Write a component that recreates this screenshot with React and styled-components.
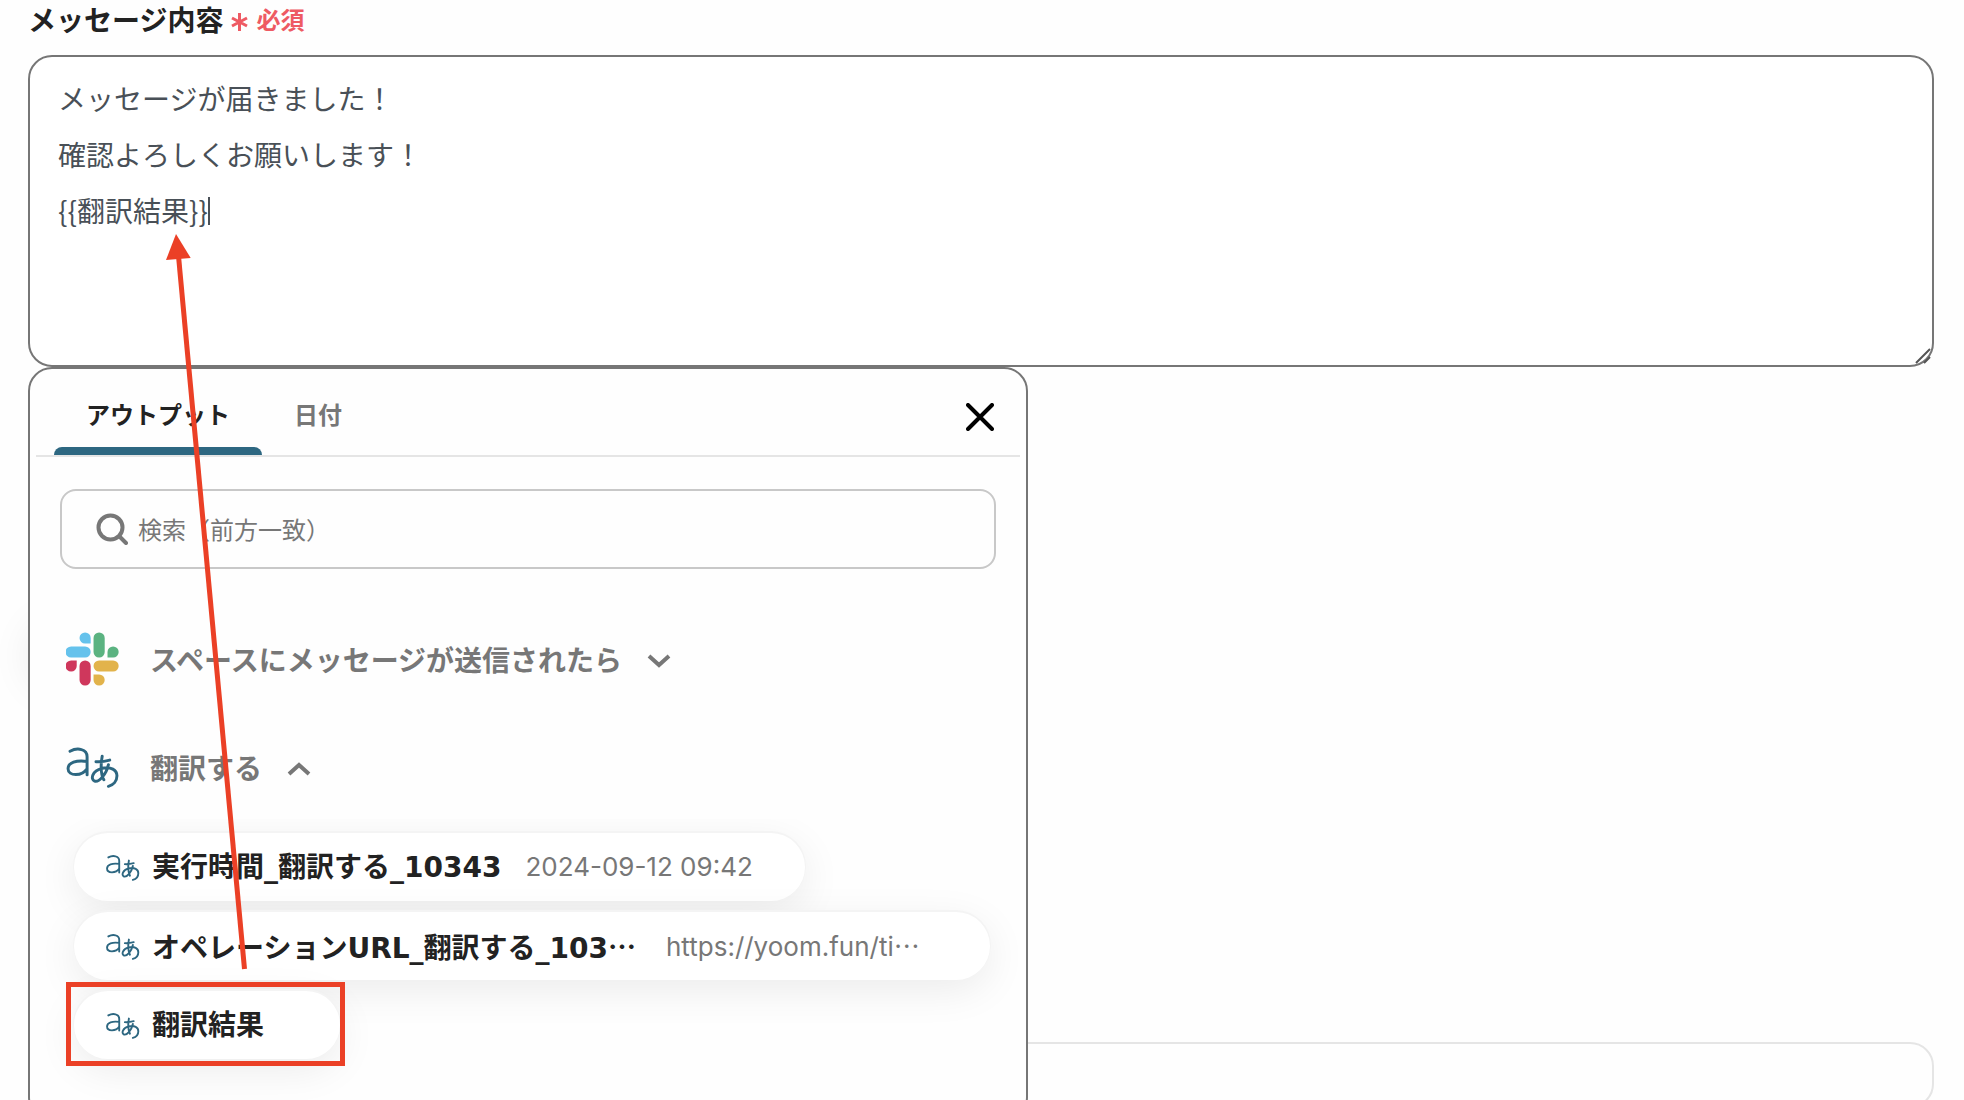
import React from "react";
import styled, { createGlobalStyle } from "styled-components";

const JP = '"Noto Sans CJK JP", "Noto Sans", sans-serif';
const NAME = '"DejaVu Sans", "Noto Sans CJK JP", sans-serif';
const VALUE = 'Inter, "Noto Sans CJK JP", sans-serif';

const GlobalStyle = createGlobalStyle`
  *, *::before, *::after { box-sizing: border-box; }
  body { margin: 0; background: #fefefe; font-family: ${JP}; color: #222; }
  button, input, textarea { font: inherit; color: inherit; margin: 0; }
  button { padding: 0; border: 0; background: none; cursor: pointer; }
`;

const Page = styled.main`
  position: relative;
  height: 100vh;
  overflow: hidden;
  padding: 0 30px 0 28px;
`;

const LabelRow = styled.div`
  display: flex;
  align-items: center;
  gap: 8px;
  height: 38px;
  margin-bottom: 17px;
  line-height: 38px;
`;

const FieldLabel = styled.label`
  font-size: 28px;
  font-weight: 700;
`;

const Required = styled.span`
  display: flex;
  align-items: center;
  gap: 8px;
  color: #ee5a63;
  font-size: 24px;
  font-weight: 700;

  svg { margin-top: 6px; }
`;

const Field = styled.div`
  position: relative;
`;

const MessageBox = styled.textarea`
  display: block;
  width: 100%;
  height: 312px;
  padding: 13px 28px;
  border: 2px solid #767676;
  border-radius: 24px;
  outline: 0;
  background: #fff;
  color: #495057;
  font-family: ${JP};
  font-size: 28px;
  line-height: 56px;
  resize: vertical;

  &::-webkit-resizer { background: transparent; }
`;

const Grip = styled.svg`
  position: absolute;
  right: 3px;
  bottom: 3px;
  pointer-events: none;
`;

const Caret = styled.span`
  position: absolute;
  top: 142px;
  left: 180px;
  width: 2px;
  height: 28px;
  background: #495057;
`;

const Panel = styled.section`
  position: absolute;
  z-index: 1;
  top: 100%;
  left: 0;
  width: 1000px;
  padding: 0 6px;
  border: 2px solid #767676;
  border-radius: 24px;
  background: #fefefe;
`;

const PanelHeader = styled.header`
  display: flex;
  align-items: stretch;
  justify-content: space-between;
  height: 88px;
  padding: 0 20px 0 18px;
  border-bottom: 2px solid #e5e5e5;
`;

const Tabs = styled.div`
  display: flex;
`;

const Tab = styled.button`
  display: flex;
  flex-direction: column;
  justify-content: space-between;
  padding-top: 25px;
  color: ${(p) => (p.$active ? "#222" : "#777")};
  font-size: 24px;
  font-weight: 700;
  line-height: 40px;

  span { padding: 0 32px; }

  &::after {
    content: "";
    width: 100%;
    height: 8px;
    border-radius: 8px 8px 0 0;
    background: ${(p) => (p.$active ? "#2d6781" : "transparent")};
  }
`;

const CloseButton = styled.button`
  display: flex;
  align-items: center;
  justify-content: center;
  width: 40px;
  padding-top: 10px;
  color: #000;
`;

const SearchBox = styled.label`
  display: flex;
  align-items: center;
  gap: 10px;
  height: 80px;
  margin: 32px 24px 38px;
  padding: 0 32px 0 34px;
  border: 2px solid #c8c8c8;
  border-radius: 16px;
  color: #777;
`;

const SearchInput = styled.input`
  flex: 1;
  min-width: 0;
  padding: 0;
  border: 0;
  outline: 0;
  background: none;
  font-size: 24px;
  line-height: 40px;

  &::placeholder { color: #777; opacity: 1; }
`;

const Groups = styled.div`
  display: flex;
  flex-direction: column;
  gap: 4px;
`;

const GroupButton = styled.button`
  display: flex;
  align-items: center;
  height: 104px;
  padding-left: 30px;
  color: #777;
  font-size: 28px;
  font-weight: 700;
  line-height: 40px;

  span { margin: 0 24px 0 30px; }
`;

const OutputList = styled.ul`
  display: flex;
  flex-direction: column;
  align-items: flex-start;
  gap: 11px;
  margin: 0;
  padding: 14px 28px 60px 38px;
  overflow: hidden;
  list-style: none;
`;

const OutputItem = styled.button`
  display: flex;
  align-items: center;
  height: 68px;
  padding: 0 52px 0 32px;
  border-radius: 34px;
  background: #fff;
  box-shadow: 0 -1px 0 1px #f4f4f4, 0 10px 40px rgba(0, 0, 0, 0.08);
  line-height: 40px;
  white-space: nowrap;
`;

const OutputName = styled.span`
  width: ${(p) => (p.$clipped ? "490px" : "auto")};
  margin: 0 24px 0 12px;
  padding-top: 2px;
  text-align: left;
  font-family: ${NAME};
  font-size: 28px;
  font-weight: 700;
`;

const OutputValue = styled.span`
  width: ${(p) => (p.$clipped ? "272px" : "auto")};
  text-align: left;
  color: #777;
  font-family: ${VALUE};
  font-size: 26px;
`;

const Ellipsis = styled.span`
  font-family: ${JP};
`;

const AddButtonShade = styled.div`
  width: 320px;
  height: 72px;
  margin: 243px 0 360px;
  border-radius: 36px;
  background: #fff;
  box-shadow: 0 10px 40px rgba(0, 0, 0, 0.08);
`;

const NextField = styled.div`
  height: 66px;
  border: 2px solid #e5e5e5;
  border-radius: 24px;
`;

const Annotation = styled.svg`
  position: absolute;
  z-index: 2;
  top: 0;
  left: 0;
  pointer-events: none;
`;

const AsteriskIcon = () => (
  <svg width="17" height="18" viewBox="0 0 17 18" fill="none" stroke="currentColor" strokeWidth="3" aria-hidden="true">
    <path d="M8.500 0V18M1 5L16 13M16 5L1 13" />
  </svg>
);

const CloseIcon = () => (
  <svg width="28" height="28" viewBox="0 0 28 28" fill="none" stroke="currentColor" strokeWidth="4" strokeLinecap="round" aria-hidden="true">
    <path d="M2 2L26 26M26 2L2 26" />
  </svg>
);

const SearchIcon = () => (
  <svg width="32" height="32" viewBox="0 0 32 32" fill="none" stroke="currentColor" strokeWidth="4" strokeLinecap="round" aria-hidden="true">
    <circle cx="14.500" cy="14.500" r="12" />
    <path d="M23.500 23.500L30 30" />
  </svg>
);

const Chevron = ({ up }) => (
  <svg width="26" height="20" viewBox="0 0 26 20" fill="none" stroke="currentColor" strokeWidth="4" aria-hidden="true">
    <path d={up ? "M3 17L13 8L23 17" : "M3 7L13 16L23 7"} />
  </svg>
);

const SlackIcon = () => (
  <svg width="54" height="54" viewBox="0.2 -0.2 24.4 24.4" aria-hidden="true">
    <path fill="#cf375c" d="M5.042 15.165a2.528 2.528 0 0 1-2.520 2.523A2.528 2.528 0 0 1 0 15.165a2.527 2.527 0 0 1 2.522-2.520h2.520v2.520zM6.313 15.165a2.527 2.527 0 0 1 2.521-2.520 2.527 2.527 0 0 1 2.521 2.520v6.313A2.528 2.528 0 0 1 8.834 24a2.528 2.528 0 0 1-2.521-2.522v-6.313z" />
    <path fill="#65c2ec" d="M8.834 5.042a2.528 2.528 0 0 1-2.521-2.520A2.528 2.528 0 0 1 8.834 0a2.528 2.528 0 0 1 2.521 2.522v2.520H8.834zM8.834 6.313a2.528 2.528 0 0 1 2.521 2.521 2.528 2.528 0 0 1-2.521 2.521H2.522A2.528 2.528 0 0 1 0 8.834a2.528 2.528 0 0 1 2.522-2.521h6.312z" />
    <path fill="#5bb381" d="M18.956 8.834a2.528 2.528 0 0 1 2.522-2.521A2.528 2.528 0 0 1 24 8.834a2.528 2.528 0 0 1-2.522 2.521h-2.522V8.834zM17.688 8.834a2.528 2.528 0 0 1-2.523 2.521 2.527 2.527 0 0 1-2.520-2.521V2.522A2.527 2.527 0 0 1 15.165 0a2.528 2.528 0 0 1 2.523 2.522v6.312z" />
    <path fill="#e2b34b" d="M15.165 18.956a2.528 2.528 0 0 1 2.523 2.522A2.528 2.528 0 0 1 15.165 24a2.527 2.527 0 0 1-2.520-2.522v-2.522h2.520zM15.165 17.688a2.527 2.527 0 0 1-2.520-2.523 2.526 2.526 0 0 1 2.520-2.520h6.313A2.527 2.527 0 0 1 24 15.165a2.528 2.528 0 0 1-2.522 2.523h-6.313z" />
  </svg>
);

const TranslateIcon = ({ width, height }) => (
  <svg width={width} height={height} viewBox="20 19 162 128" fill="none" stroke="#2d6781" strokeWidth="9" strokeLinecap="round" aria-hidden="true">
    <path d="M31 35C44 28 56 27 66 30C78 33 83 40 83 52V107M83 66C50 61 25 70 25 88C25 112 68 112 83 88" />
    <path d="M110 67C124 68 138 66 152 62M129 50C124 80 124 104 134 122M148 76C142 104 120 130 106 126C92 120 99 94 128 87C156 81 174 92 174 110C174 126 163 138 148 142" />
  </svg>
);

const outputs = [
  { name: "実行時間_翻訳する_10343", value: "2024-09-12 09:42" },
  { name: "オペレーションURL_翻訳する_103", value: "https://yoom.fun/ti", clipped: true },
  { name: "翻訳結果" },
];

export default function App() {
  return (
    <Page lang="ja">
      <GlobalStyle />
      <LabelRow>
        <FieldLabel htmlFor="message">メッセージ内容</FieldLabel>
        <Required>
          <AsteriskIcon />
          必須
        </Required>
      </LabelRow>
      <Field>
        <MessageBox
          id="message"
          spellCheck={false}
          defaultValue={"メッセージが届きました！\n確認よろしくお願いします！\n{{翻訳結果}}"}
        />
        <Caret />
        <Grip width="16" height="16" viewBox="0 0 16 16" fill="none" stroke="#555" strokeWidth="2" aria-hidden="true">
          <path d="M1 15L15 1M9 15L15 9" />
        </Grip>
        <Panel>
          <PanelHeader>
            <Tabs role="tablist">
              <Tab type="button" role="tab" aria-selected="true" $active>
                <span>アウトプット</span>
              </Tab>
              <Tab type="button" role="tab" aria-selected="false">
                <span>日付</span>
              </Tab>
            </Tabs>
            <CloseButton type="button" aria-label="閉じる">
              <CloseIcon />
            </CloseButton>
          </PanelHeader>
          <SearchBox>
            <SearchIcon />
            <SearchInput type="text" placeholder="検索（前方一致）" aria-label="検索" />
          </SearchBox>
          <Groups>
            <GroupButton type="button" aria-expanded="false">
              <SlackIcon />
              <span>スペースにメッセージが送信されたら</span>
              <Chevron />
            </GroupButton>
            <GroupButton type="button" aria-expanded="true">
              <TranslateIcon width={54} height={42} />
              <span>翻訳する</span>
              <Chevron up />
            </GroupButton>
          </Groups>
          <OutputList>
            {outputs.map(({ name, value, clipped }) => (
              <li key={name}>
                <OutputItem type="button">
                  <TranslateIcon width={34} height={27} />
                  <OutputName $clipped={clipped}>
                    {name}
                    {clipped && <Ellipsis>…</Ellipsis>}
                  </OutputName>
                  {value && (
                    <OutputValue $clipped={clipped}>
                      {value}
                      {clipped && <Ellipsis>…</Ellipsis>}
                    </OutputValue>
                  )}
                </OutputItem>
              </li>
            ))}
          </OutputList>
        </Panel>
      </Field>
      <AddButtonShade />
      <NextField />
      <Annotation width="360" height="1080" viewBox="0 0 360 1080" fill="none" stroke="#eb4026" strokeWidth="5" aria-hidden="true">
        <path d="M178.500 256L244.500 969" />
        <path d="M176 234L190.700 258L166 260Z" fill="#eb4026" stroke="none" />
        <rect x="68.500" y="984.500" width="274" height="79" />
      </Annotation>
    </Page>
  );
}
